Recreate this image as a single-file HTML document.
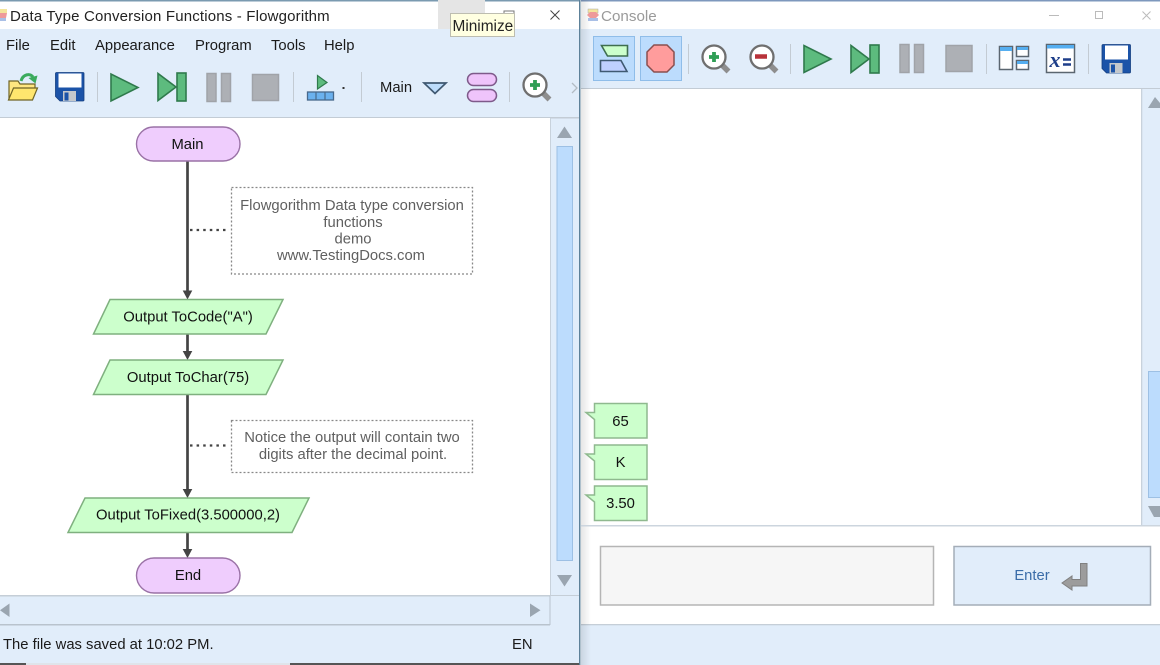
<!DOCTYPE html>
<html><head><meta charset="utf-8"><style>
html,body{margin:0;padding:0;width:1160px;height:665px;overflow:hidden;background:#fff}
svg{display:block;font-family:"Liberation Sans",sans-serif;filter:blur(.35px)}
text{fill:#222}
.n{font-size:14.8px;text-anchor:middle;fill:#111}
.c{font-size:14.8px;text-anchor:middle;fill:#5f5f5f}
.m{font-size:14.8px;fill:#1a1a1a}
</style></head><body>
<svg width="1160" height="665" viewBox="0 0 1160 665" xmlns="http://www.w3.org/2000/svg">
<defs>
<linearGradient id="sh" x1="0" x2="1" y1="0" y2="0"><stop offset="0" stop-color="#000" stop-opacity=".1"/><stop offset="1" stop-color="#000" stop-opacity="0"/></linearGradient>
<g id="play"><path d="M1 1V28L28 14.500Z" fill="#5dbb7e" stroke="#2f7a4c" stroke-width="1.600"/></g>
<g id="step"><path d="M1 1V28L19 14.500Z" fill="#5dbb7e" stroke="#2f7a4c" stroke-width="1.600"/><rect x="20" y="0.500" width="9" height="28" fill="#5dbb7e" stroke="#2f7a4c" stroke-width="1.600"/></g>
<g id="pause"><rect x="0.500" y="0.500" width="9" height="28" fill="#adb0b5" stroke="#a0a3a8" stroke-width="1.500"/><rect x="15" y="0.500" width="9" height="28" fill="#adb0b5" stroke="#a0a3a8" stroke-width="1.500"/></g>
<g id="stop"><rect x="0.500" y="0.500" width="26" height="26" fill="#adb0b5" stroke="#a0a3a8" stroke-width="1.500"/></g>
<g id="disk"><path d="M0.500 1.500a1 1 0 0 1 1-1H28a1 1 0 0 1 1 1V28a1 1 0 0 1-1 1H5L0.500 24.500Z" fill="#1b53a8" stroke="#153f80" stroke-width=".8"/><rect x="3.500" y="1.500" width="23" height="14" fill="#fff"/><rect x="8" y="19" width="13" height="10" fill="#c4c8cc"/><rect x="9.500" y="20.500" width="4" height="8" fill="#1b53a8"/></g>
<g id="mag"><path d="M20 20L27.500 27.500" stroke="#8e8e8e" stroke-width="5.500"/><circle cx="13" cy="13" r="11.500" fill="#fff" stroke="#6f6f6f" stroke-width="2.300"/></g>
</defs>

<!-- LEFT WINDOW -->
<rect x="0" y="0" width="580" height="29" fill="#fff"/>
<rect x="0" y="0" width="580" height="1.500" fill="#7a9ab0"/>
<rect x="0" y="29" width="580" height="636" fill="#e1edfa"/>
<rect x="438" y="0" width="47" height="29" fill="#e5e5e5"/>
<rect x="504" y="11" width="10" height="10" fill="none" stroke="#777"/>
<path d="M550.500 10.500l9 9M559.500 10.500l-9 9" stroke="#444" stroke-width="1"/>
<g><rect x="0" y="9" width="7" height="4" fill="#f3e59c"/><path d="M0 13h7l-1 5H0Z" fill="#ee9a9a"/><rect x="0" y="18" width="6" height="3" fill="#a9bfe6"/></g>
<text x="10" y="21" style="font-size:15px;letter-spacing:.17px" fill="#222">Data Type Conversion Functions - Flowgorithm</text>

<rect x="450.500" y="13.500" width="64" height="23" fill="#ffffe1" stroke="#bdbdb0"/>
<text x="452.500" y="31" style="font-size:15.400px" fill="#222">Minimize</text>

<text x="6" y="50" class="m">File</text>
<text x="50" y="50" class="m">Edit</text>
<text x="95" y="50" class="m">Appearance</text>
<text x="195" y="50" class="m">Program</text>
<text x="271" y="50" class="m">Tools</text>
<text x="324" y="50" class="m">Help</text>

<!-- toolbar left -->
<path d="M21 81C23 74 30 73 33 77" fill="none" stroke="#3bab5d" stroke-width="3"/>
<path d="M28.500 78L37.500 75.500 35.500 83.500Z" fill="#3bab5d"/>
<path d="M9 100V81h9l2 3h15v6" fill="#ffe680" stroke="#6f6426" stroke-width="1.200"/>
<path d="M8.500 100l5-12h24l-5 12Z" fill="#ffe66e" stroke="#6f6426" stroke-width="1.200"/>
<use href="#disk" x="55" y="72"/>
<rect x="97" y="72" width="1" height="30" fill="#c3cbd3"/>
<use href="#play" x="110" y="73"/>
<use href="#step" x="157" y="72.500"/>
<use href="#pause" x="206.500" y="73"/>
<use href="#stop" x="252" y="74"/>
<rect x="293" y="72" width="1" height="30" fill="#c3cbd3"/>
<path d="M317.500 75.500V89L327 82.500Z" fill="#5dbb7e" stroke="#2f7a4c" stroke-width="1.200"/>
<rect x="307.500" y="92" width="26" height="8" fill="#6bb1ee" stroke="#47698c" stroke-width="1.300"/>
<path d="M316 92v8M325 92v8" stroke="#47698c" stroke-width="1.200"/>
<rect x="342.500" y="87" width="2" height="2" fill="#333"/>
<rect x="361" y="72" width="1" height="30" fill="#c3cbd3"/>
<text x="380" y="92" class="m">Main</text>
<path d="M424 83H446L435 93.500Z" fill="#bcdcfb" stroke="#3f5870" stroke-width="1.700"/>
<rect x="467.500" y="73.500" width="29" height="12" rx="6" fill="#efc4fb" stroke="#7e5a8a" stroke-width="1.500"/>
<rect x="467.500" y="89.500" width="29" height="12" rx="6" fill="#efc4fb" stroke="#7e5a8a" stroke-width="1.500"/>
<rect x="509" y="72" width="1" height="30" fill="#c3cbd3"/>
<use href="#mag" x="522" y="72"/>
<path d="M535 80v10M530 85h10" stroke="#2f9e55" stroke-width="3.800"/>
<path d="M572 83l5 5-5 5" fill="none" stroke="#b3bcc4" stroke-width="1.300"/>

<!-- canvas -->
<rect x="0" y="117" width="580" height="1.500" fill="#c3ccd5"/>
<rect x="0" y="118" width="550" height="478" fill="#fff"/>
<rect x="550" y="118" width="1" height="478" fill="#c8d2dc"/>
<rect x="557" y="146.500" width="15.500" height="414" fill="#bcdcfd" stroke="#9dc0e4"/>
<path d="M557 138L564.500 126.500 572 138Z" fill="#9aa5b0"/>
<path d="M557 575L564.500 586.500 572 575Z" fill="#9aa5b0"/>
<rect x="0" y="595" width="550" height="1.500" fill="#c5ced7"/>
<rect x="550" y="595" width="30" height="1" fill="#c5ced7"/>
<rect x="0" y="624" width="550" height="1.500" fill="#b9c3cd"/>
<rect x="549.500" y="596" width="1" height="29" fill="#b9c3cd"/>
<path d="M9.500 603.500V617L0 610.200Z" fill="#9aa5b0"/>
<path d="M530 603.500V617L540.500 610.200Z" fill="#9aa5b0"/>
<text x="3" y="649" class="m">The file was saved at 10:02 PM.</text>
<text x="512" y="649" class="m">EN</text>

<!-- flowchart -->
<g stroke="#444" stroke-width="2.700">
<path d="M187.500 161V292M187.500 334V354M187.500 395V491M187.500 533V552"/>
</g>
<g fill="#444">
<path d="M182.700 290.500h9.600l-4.800 9Z"/>
<path d="M182.700 351h9.600l-4.800 9Z"/>
<path d="M182.700 489h9.600l-4.800 9Z"/>
<path d="M182.700 549h9.600l-4.800 9Z"/>
</g>
<rect x="136.500" y="127" width="103.500" height="34" rx="17" fill="#efcdfd" stroke="#9a72a6" stroke-width="1.400"/>
<text x="187.500" y="149" class="n">Main</text>
<path d="M190 230H229" stroke="#444" stroke-width="2.300" stroke-dasharray="2.500 4.100"/>
<path d="M190 445.500H229" stroke="#444" stroke-width="2.300" stroke-dasharray="2.500 4.100"/>
<rect x="231.500" y="187.500" width="241" height="86.500" fill="#fff" stroke="#888" stroke-width="1.300" stroke-dasharray="2 2"/>
<text x="352" y="210" class="c">Flowgorithm Data type conversion</text>
<text x="353" y="227" class="c">functions</text>
<text x="353" y="243.500" class="c">demo</text>
<text x="351" y="260" class="c">www.TestingDocs.com</text>
<rect x="231.500" y="420.500" width="241" height="52" fill="#fff" stroke="#888" stroke-width="1.300" stroke-dasharray="2 2"/>
<text x="352" y="442" class="c">Notice the output will contain two</text>
<text x="353" y="459" class="c">digits after the decimal point.</text>
<g fill="#ccffcc" stroke="#7fb07f" stroke-width="1.500">
<path d="M110 299.500H283L266 334H93.500Z"/>
<path d="M110 360H283L266 394.500H93.500Z"/>
<path d="M85 498H309L292 532.500H68Z"/>
</g>
<text x="188" y="321.500" class="n">Output ToCode("A")</text>
<text x="188" y="382" class="n">Output ToChar(75)</text>
<text x="188" y="519.500" class="n">Output ToFixed(3.500000,2)</text>
<rect x="136.500" y="558" width="103.500" height="35" rx="17.500" fill="#efcdfd" stroke="#9a72a6" stroke-width="1.400"/>
<text x="188" y="580" class="n">End</text>

<rect x="0" y="663" width="26" height="2" fill="#555"/>
<rect x="26" y="663" width="264" height="2" fill="#dfe4ea"/>
<rect x="290" y="663" width="290" height="2" fill="#555"/>
<rect x="579" y="0" width="1.500" height="665" fill="#5d8199"/>

<!-- RIGHT WINDOW -->
<rect x="581" y="0" width="579" height="29" fill="#fff"/>
<rect x="581" y="0" width="579" height="1.500" fill="#7e98bd"/>
<rect x="581" y="29" width="579" height="59" fill="#e1edfa"/>
<rect x="581" y="88" width="579" height="1.300" fill="#c3ccd5"/>
<rect x="581" y="89" width="579" height="436" fill="#fff"/>
<rect x="581" y="625" width="579" height="40" fill="#e1edfa"/>
<rect x="581" y="624" width="579" height="1.300" fill="#c5ced7"/>
<rect x="581" y="0" width="10" height="665" fill="url(#sh)"/>
<g><rect x="588" y="9" width="10" height="4" fill="#f3e59c" stroke="#aaa" stroke-width=".5"/><path d="M587 15l3-3h6l3 3-3 3h-6Z" fill="#ee9a9a"/><rect x="588" y="18" width="10" height="3" fill="#a9bfe6"/></g>
<text x="601" y="21" style="font-size:15.200px;fill:#9a9a9a">Console</text>
<rect x="1049" y="15" width="10" height="1" fill="#bbb"/>
<rect x="1095.500" y="11.500" width="7" height="7" fill="none" stroke="#bbb"/>
<path d="M1142.500 11.500l8 8M1150.500 11.500l-8 8" stroke="#bbb" stroke-width="1"/>

<rect x="593.500" y="36.500" width="41" height="44" fill="#bcdcfd" stroke="#8fbde9"/>
<rect x="640.500" y="36.500" width="41" height="44" fill="#bcdcfd" stroke="#8fbde9"/>
<path d="M601.500 45.500H627.500V56H607.500Z" fill="#ccffcc" stroke="#3f6e4f" stroke-width="1.600"/>
<path d="M600.500 60.500H621L627 71.500H600.500Z" fill="#bfd0ff" stroke="#3f5a72" stroke-width="1.600"/>
<path d="M654 45h13l7 7v13l-7 7h-13l-7-7V52Z" fill="#ff9c9c" stroke="#8a4f4f" stroke-width="1.500"/>
<rect x="688" y="44" width="1" height="30" fill="#c3cbd3"/>
<use href="#mag" x="701" y="44"/>
<path d="M714 52v10M709 57h10" stroke="#2f9e55" stroke-width="3.800"/>
<use href="#mag" x="749" y="44"/>
<path d="M755 56.500h12" stroke="#b8323a" stroke-width="4.500"/>
<rect x="790" y="44" width="1" height="30" fill="#c3cbd3"/>
<use href="#play" x="803" y="44.500"/>
<use href="#step" x="850" y="44.500"/>
<use href="#pause" x="899.500" y="44"/>
<use href="#stop" x="945.500" y="45"/>
<rect x="986" y="44" width="1" height="30" fill="#c3cbd3"/>
<rect x="999.500" y="46.500" width="13" height="23" fill="#fff" stroke="#5b6670" stroke-width="1.500"/>
<rect x="1000" y="47" width="12" height="4" fill="#55aef0"/>
<rect x="1016.500" y="46.500" width="12" height="10" fill="#fff" stroke="#5b6670" stroke-width="1.500"/>
<rect x="1017" y="47" width="11" height="3" fill="#55aef0"/>
<rect x="1016.500" y="60.500" width="12" height="9" fill="#fff" stroke="#5b6670" stroke-width="1.500"/>
<rect x="1017" y="61" width="11" height="3" fill="#55aef0"/>
<rect x="1046.500" y="44.500" width="28" height="28" fill="#fff" stroke="#5b6670" stroke-width="1.500"/>
<rect x="1047" y="45" width="27" height="3.500" fill="#55aef0"/>
<text x="1049.500" y="67" style="font:italic bold 22px 'Liberation Serif',serif;fill:#1f3f8a">x</text>
<path d="M1063 59.500h8M1063 64.500h8" stroke="#1f3f8a" stroke-width="2.500"/>
<rect x="1088" y="44" width="1" height="30" fill="#c3cbd3"/>
<use href="#disk" x="1101.500" y="44"/>

<rect x="1141" y="89" width="19" height="436" fill="#e1edfa"/>
<rect x="1141" y="89" width="1.300" height="436" fill="#c8d2dc"/>
<path d="M1148 108L1155 97 1160 103V108Z" fill="#9aa5b0"/>
<rect x="1148.500" y="371.500" width="14" height="126" fill="#bcdcfd" stroke="#9dc0e4"/>
<path d="M1148 506H1160V517L1154 517Z" fill="#9aa5b0"/>
<rect x="581" y="525" width="579" height="1.500" fill="#ccd5de"/>

<g fill="#ccffcc" stroke="#8fb98f" stroke-width="1.500">
<path d="M594.500 403.500H647V438H594.500V419.500L586 412.500H594.500Z"/>
<path d="M594.500 445H647V479.500H594.500V461L586 454H594.500Z"/>
<path d="M594.500 486H647V520.500H594.500V502L586 495H594.500Z"/>
</g>
<text x="620.500" y="426" class="n">65</text>
<text x="620.500" y="467" class="n">K</text>
<text x="620.500" y="508" class="n">3.50</text>

<rect x="600.500" y="546.500" width="333" height="58.500" fill="#f6f6f6" stroke="#b5b5b5" stroke-width="1.500"/>
<rect x="954" y="546.500" width="196.500" height="58.500" fill="#e1edfa" stroke="#a4adb8" stroke-width="1.500"/>
<text x="1032" y="580" style="font-size:14.800px;text-anchor:middle;fill:#3a6ca8">Enter</text>
<path d="M1080.500 563.500H1087V586H1072V590L1062 583 1072 576V579.500H1080.500Z" fill="#9c9c9c" stroke="#808080"/>
</svg>
</body></html>
